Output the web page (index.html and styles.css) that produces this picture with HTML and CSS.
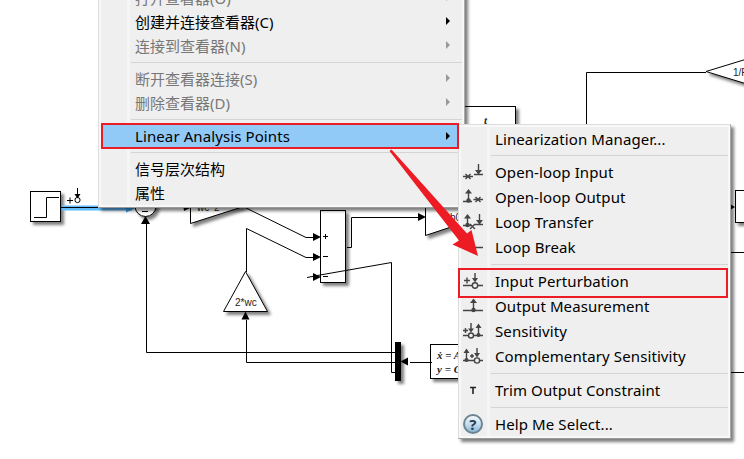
FILE: index.html
```html
<!DOCTYPE html>
<html lang="zh">
<head>
<meta charset="utf-8">
<title>Linear Analysis Points</title>
<link rel="stylesheet" href="styles.css">
</head>
<body>
<main class="canvas">
<svg class="diagram" width="744" height="459" viewBox="0 0 744 459">
  <defs>
    <filter id="sh" x="-30%" y="-30%" width="170%" height="170%"><feDropShadow dx="3" dy="3" stdDeviation="1.6" flood-color="#000" flood-opacity=".5"/></filter>
  </defs>
  <g class="block" filter="url(#sh)">
    <rect x="30.5" y="191.500" width="30" height="30"/>
    <circle cx="145.500" cy="206" r="10.500"/>
    <path d="M190.500 180V223.500L242 207L270 190Z"/>
    <rect x="320.500" y="210.500" width="25" height="72"/>
    <path d="M245.500 271.500L223.500 311.500H267.500Z"/>
    <path d="M425.500 200V235.500L475 219V200Z"/>
    <rect x="430.500" y="344.500" width="60" height="34"/>
    <rect x="450.500" y="106.500" width="65" height="40"/>
    <path d="M706 71.500L760 55V88Z"/>
    <rect x="735.500" y="190.500" width="30" height="32"/>
    <rect class="solid" x="395" y="342" width="6" height="39"/>
  </g>
  <path class="glow" d="M62 208H132"/>
  <path class="tip" d="M126 203.500L135 208.500L126 212.500Z"/>
  <g class="wire">
    <path d="M34 217.500H46.500V197.500H59M61 207.500H126"/>
    <path d="M67 200.500H73M70 197.500V203.500M77.500 188V196"/>
    <circle cx="77.500" cy="200" r="2.600"/>
    <path d="M142 211.500H148M146.500 222V352.500H395M246.500 320V362.500H395M410 362.500H432M395 372.500H391.500V262.500L320 275L307 277.500"/>
    <path d="M246.500 272V228.500L306 257.500H314M246 208L306 237.500H314M347 247.500H351.500V217.500H419"/>
    <path d="M323 236.500H328M325.500 234V239M323 256.500H328M323 276.500H328"/>
    <path d="M586.500 125V72.500H706M730 252.500H744M730 372.500H744"/>
  </g>
  <g class="solid">
    <path d="M313 233L321 237L313 241ZM313 253L321 257L313 261ZM313 273L321 277L313 281ZM418 213L426 217L418 221ZM141 224L145.500 216L150 224ZM241.500 319.500L245.500 311.500L249.500 319.500ZM408 357.500L400.500 361.500L408 365.500ZM183 204.500L190 208L184 211ZM730 204L735 207L730 210ZM74.500 194H80.500L77.500 198.500Z"/>
  </g>
  <g class="label">
    <text x="197" y="211">wc^2</text>
    <text x="235" y="306">2*wc</text>
    <text x="450" y="221">b0</text>
    <text x="733" y="76">1/R</text>
    <text class="math" x="484" y="124">t</text>
    <text class="math" x="437" y="359">ẋ = Ax</text>
    <text class="math" x="437" y="373">y = Cx</text>
  </g>
</svg>

<div class="menu context">
  <div class="row off"><span>打开查看器(O)</span><i class="more"></i></div>
  <div class="row"><span>创建并连接查看器(C)</span><i class="more"></i></div>
  <div class="row off"><span>连接到查看器(N)</span><i class="more"></i></div>
  <hr>
  <div class="row off"><span>断开查看器连接(S)</span><i class="more"></i></div>
  <div class="row off"><span>删除查看器(D)</span><i class="more"></i></div>
  <hr>
  <div class="row active"><span>Linear Analysis Points</span><i class="more"></i></div>
  <hr>
  <div class="row"><span>信号层次结构</span></div>
  <div class="row"><span>属性</span></div>
</div>

<div class="menu submenu">
  <div class="row"><span>Linearization Manager...</span></div>
  <hr>
  <div class="row"><svg class="icon" viewBox="0 0 20 20"><path d="M0 14.500H10M2.500 12L7.500 17M7.500 12L2.500 17M11 12.500H20M15.500 2V12"/><path class="fill" d="M12 8H19L15.500 12.500Z"/></svg><span>Open-loop Input</span></div>
  <div class="row"><svg class="icon" viewBox="0 0 20 20"><path d="M0 14.500H9M5.500 4V14M10.500 12.500H20M12.500 10L17.500 15M17.500 10L12.500 15"/><path class="fill" d="M2 6.500L5.500 2L9 6.500Z"/><circle class="fill" cx="5.500" cy="13.500" r="2.200"/></svg><span>Open-loop Output</span></div>
  <div class="row"><svg class="icon" viewBox="0 0 20 20"><path d="M0 13.500H8M4.500 4V14M7 12L12 17M12 12L7 17M12 12.500H20M16.500 2V12"/><path class="fill" d="M1 6.500L4.500 2L8 6.500ZM13 8H20L16.500 12.500Z"/><circle class="fill" cx="4.500" cy="13" r="2.200"/></svg><span>Loop Transfer</span></div>
  <div class="row"><svg class="icon" viewBox="0 0 20 20"><path d="M0 10.500H7M12 10.500H20"/></svg><span>Loop Break</span></div>
  <hr>
  <div class="row"><svg class="icon" viewBox="0 0 20 20"><path d="M0 14.500H9M15 14.500H20M1 9.500H7M4 6.500V12.500M12 2V9"/><path class="fill" d="M9 7H15L12 11.500Z"/><circle cx="12" cy="14.500" r="2.700"/></svg><span>Input Perturbation</span></div>
  <div class="row"><svg class="icon" viewBox="0 0 20 20"><path d="M0 14.500H20M10.500 4V14"/><path class="fill" d="M7 7L10.500 2.500L14 7Z"/><circle class="fill" cx="10.500" cy="14" r="2.200"/></svg><span>Output Measurement</span></div>
  <div class="row"><svg class="icon" viewBox="0 0 20 20"><path d="M0 14.500H5M11 14.500H20M0 9.500H5M2.500 7V12M8 2V9M15.500 4V14"/><path class="fill" d="M5 7.500H11L8 11.500ZM12.500 7L15.500 2.500L18.500 7Z"/><circle cx="8" cy="14.500" r="2.500"/><circle class="fill" cx="15.500" cy="14" r="2"/></svg><span>Sensitivity</span></div>
  <div class="row"><svg class="icon" viewBox="0 0 20 20"><path d="M0 14.500H11M17 14.500H20M7 10H11M9 8V12M3.500 4V14M14 2V9"/><path class="fill" d="M.5 7L3.500 2.500L6.500 7ZM11 7H17L14 11.500Z"/><circle cx="14" cy="14.500" r="2.600"/><circle class="fill" cx="3.500" cy="14" r="2"/></svg><span>Complementary Sensitivity</span></div>
  <hr>
  <div class="row"><svg class="icon trim" viewBox="0 0 20 20"><path d="M7 7.500H13M10 7V14"/></svg><span>Trim Output Constraint</span></div>
  <hr>
  <div class="row"><b class="help">?</b><span>Help Me Select...</span></div>
</div>

<div class="mark mark-parent"></div>
<div class="mark mark-item"></div>
<svg class="pointer" width="744" height="459" viewBox="0 0 744 459"><path d="M389.500 151L391.500 149.500L467 233.500L471.500 230L478 256L452.500 244.500L459 240.500Z"/></svg>
</main>
</body>
</html>
```

FILE: styles.css
```css
* { box-sizing: border-box; }
body { margin: 0; background: #fff; }
.canvas {
  position: relative;
  width: 744px;
  height: 459px;
  overflow: hidden;
  font-family: "Noto Sans", "Noto Sans CJK SC", sans-serif;
}
.diagram { display: block; }
.block { fill: #fff; stroke: #000; }
.wire { fill: none; stroke: #000; }
.solid { fill: #000; stroke: none; }
.glow { stroke: #5fbdff; stroke-width: 5; }
.tip { fill: #3e9fe8; }
.label { font: 10px "Liberation Sans", sans-serif; fill: #222; }
.math { font: italic bold 11px "Liberation Serif", serif; }

.menu {
  position: absolute;
  border: 1px solid #dcdcdc;
  border-right-color: #aaa;
  border-bottom-color: #999;
  background: linear-gradient(90deg, #efefef 28px, #f5f5f5 28px 31px, #efefef 31px);
  box-shadow: inset 0 0 0 2px #f8f8f8, 3px 3px 3px rgba(0, 0, 0, .5);
  color: #000;
  font-size: 15px;
}
.context { left: 98px; top: -17px; width: 367px; height: 225px; padding: 2px 2px 0; }
.submenu { left: 458px; top: 124px; width: 273px; height: 315px; padding: 1px 2px 0; }
.row {
  position: relative;
  display: flex;
  align-items: center;
  height: 25px;
  padding: 0 0 2px 34px;
  white-space: nowrap;
}
.context .row { height: 24px; }
.context .active,
.submenu .row:first-child { padding-bottom: 0; }
.submenu, .active { letter-spacing: .1px; }
.off { color: #777; }
.active { background: #91c9f7; }
.menu hr {
  height: 1px;
  margin: 4px 0 4px 30px;
  border: 0;
  background: #d4d4d4;
}
.more {
  margin-left: auto;
  margin-right: 12px;
  border: 4px solid transparent;
  border-left-color: currentColor;
  border-right: 0;
}
.off .more { border-left-color: #999; }
.icon {
  position: absolute;
  left: 2px;
  top: 2px;
  width: 20px;
  height: 20px;
  fill: none;
  stroke: #444;
  stroke-width: 1.4;
}
.icon .fill { fill: #444; stroke: none; }
.trim { stroke: #222; stroke-width: 1.6; }
.help {
  position: absolute;
  left: 2px;
  top: 2px;
  width: 20px;
  height: 20px;
  border: 2px solid #6d8593;
  border-radius: 50%;
  background: linear-gradient(#f5f8fa, #c4dced 55%, #86b6d8);
  color: #294257;
  font: bold 15px/16px "Noto Sans", sans-serif;
  text-align: center;
}
.mark { position: absolute; border: 2px solid #ed1c24; }
.mark-parent { left: 101px; top: 123px; width: 358px; height: 26px; }
.mark-item { left: 458px; top: 268px; width: 270px; height: 30px; }
.pointer { position: absolute; left: 0; top: 0; fill: #ed1c24; }
```
